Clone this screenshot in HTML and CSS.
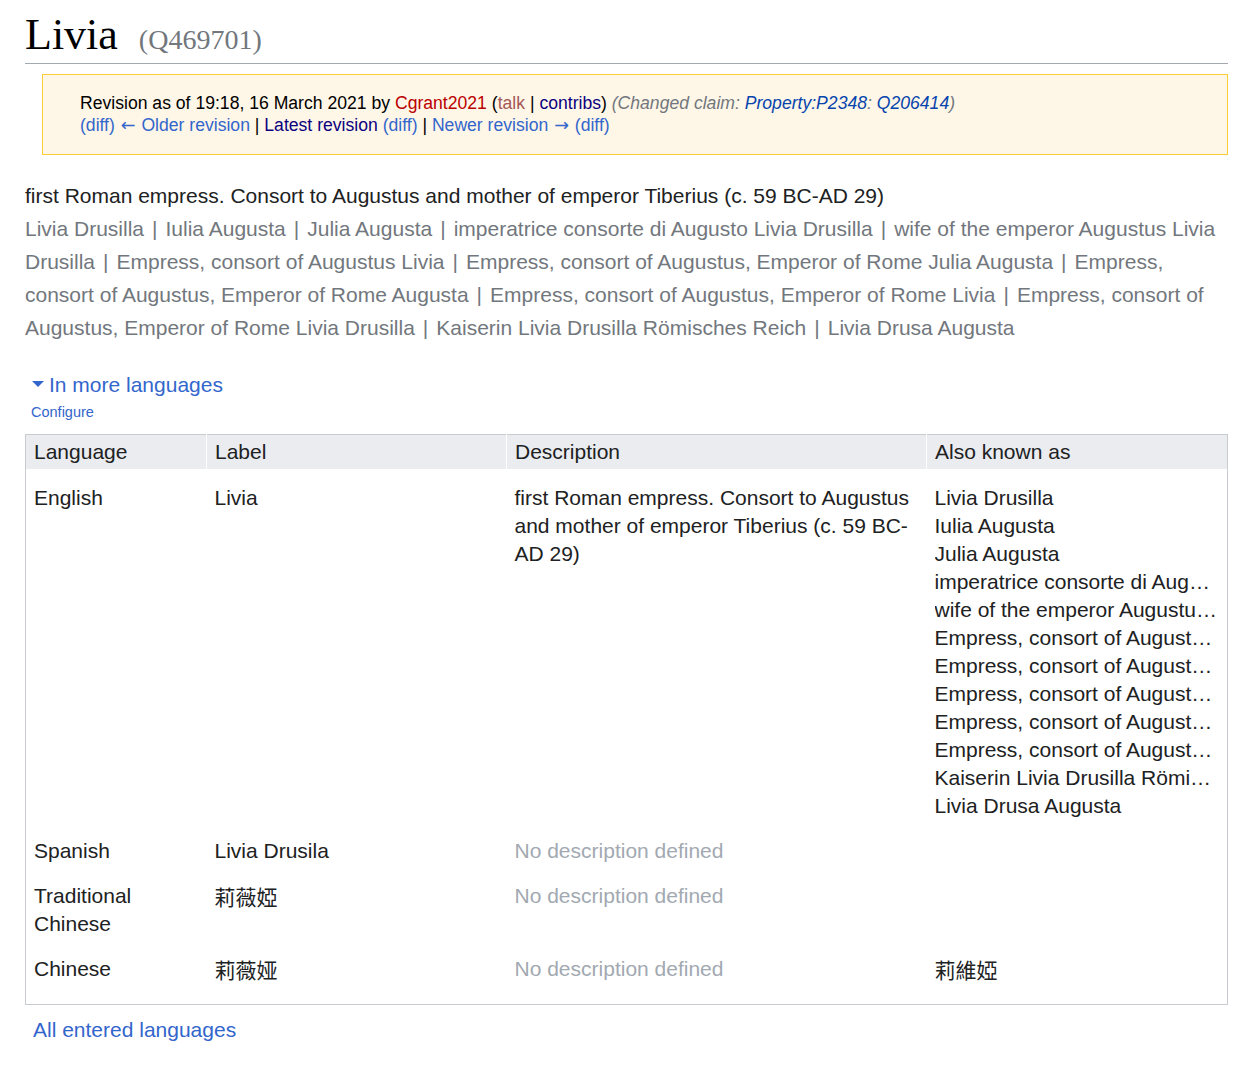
FILE: index.html
```html
<!DOCTYPE html>
<html lang="en">
<head>
<meta charset="utf-8">
<title>Livia (Q469701)</title>
<link rel="stylesheet" href="styles.css">
</head>
<body>
<div class="page">
  <h1 class="title"><span class="label">Livia</span> <span class="qid">(Q469701)</span></h1>

  <div class="revision">
    <div>Revision as of 19:18, 16 March 2021 by <a class="user">Cgrant2021</a> (<a class="talk">talk</a> | <a class="visited">contribs</a>) <span class="comment">(Changed claim: <a class="blue">Property:P2348</a>: <a class="blue">Q206414</a>)</span></div>
    <div><span class="link">(<a class="link">diff</a>)</span> <a class="link"><span class="arrow">←</span> Older revision</a> | <a class="visited">Latest revision</a> <span class="link">(<a class="link">diff</a>)</span> | <a class="link">Newer revision <span class="arrow">→</span></a> <span class="link">(<a class="link">diff</a>)</span></div>
  </div>

  <div class="termbox">
    <div class="desc">first Roman empress. Consort to Augustus and mother of emperor Tiberius (c. 59 BC-AD 29)</div>
    <div class="aliases">Livia Drusilla<span class="sep">|</span>Iulia Augusta<span class="sep">|</span>Julia Augusta<span class="sep">|</span>imperatrice consorte di Augusto Livia Drusilla<span class="sep">|</span>wife of the emperor Augustus Livia Drusilla<span class="sep">|</span>Empress, consort of Augustus Livia<span class="sep">|</span>Empress, consort of Augustus, Emperor of Rome Julia Augusta<span class="sep">|</span>Empress, consort of Augustus, Emperor of Rome Augusta<span class="sep">|</span>Empress, consort of Augustus, Emperor of Rome Livia<span class="sep">|</span>Empress, consort of Augustus, Emperor of Rome Livia Drusilla<span class="sep">|</span>Kaiserin Livia Drusilla Römisches Reich<span class="sep">|</span>Livia Drusa Augusta</div>
  </div>

  <div class="more">
    <div class="more-toggle"><span class="tri"></span><a class="link">In more languages</a></div>
    <div class="configure"><a class="link">Configure</a></div>
  </div>

  <table class="langs">
    <colgroup>
      <col class="c1"><col class="c2"><col class="c3"><col class="c4">
    </colgroup>
    <thead>
      <tr><th>Language</th><th>Label</th><th>Description</th><th>Also known as</th></tr>
    </thead>
    <tbody>
      <tr>
        <td>English</td>
        <td>Livia</td>
        <td>first Roman empress. Consort to Augustus and mother of emperor Tiberius (c. 59 BC-AD 29)</td>
        <td>
          <ul class="alias-list">
            <li>Livia Drusilla</li>
            <li>Iulia Augusta</li>
            <li>Julia Augusta</li>
            <li>imperatrice consorte di Augusto Livia Drusilla</li>
            <li>wife of the emperor Augustus Livia Drusilla</li>
            <li>Empress, consort of Augustus Livia</li>
            <li>Empress, consort of Augustus, Emperor of Rome Julia Augusta</li>
            <li>Empress, consort of Augustus, Emperor of Rome Augusta</li>
            <li>Empress, consort of Augustus, Emperor of Rome Livia</li>
            <li>Empress, consort of Augustus, Emperor of Rome Livia Drusilla</li>
            <li>Kaiserin Livia Drusilla Römisches Reich</li>
            <li>Livia Drusa Augusta</li>
          </ul>
        </td>
      </tr>
      <tr>
        <td>Spanish</td>
        <td>Livia Drusila</td>
        <td class="none">No description defined</td>
        <td></td>
      </tr>
      <tr>
        <td>Traditional Chinese</td>
        <td lang="zh-Hant" class="cjk">莉薇婭</td>
        <td class="none">No description defined</td>
        <td></td>
      </tr>
      <tr>
        <td>Chinese</td>
        <td lang="zh" class="cjk">莉薇娅</td>
        <td class="none">No description defined</td>
        <td lang="zh" class="cjk">莉維婭</td>
      </tr>
    </tbody>
  </table>

  <div class="all"><a class="link">All entered languages</a></div>
</div>
</body>
</html>
```

FILE: styles.css
```css
html, body {
  margin: 0;
  padding: 0;
  background: #fff;
}

.page {
  padding: 0 21px 0 25px;
  font-family: "Liberation Sans", Arial, sans-serif;
  color: #202122;
}

a {
  text-decoration: none;
  cursor: pointer;
}

.title {
  margin: 0;
  padding: 10px 0 3px;
  font-family: "Liberation Serif", "DejaVu Serif", serif;
  font-weight: normal;
  font-size: 44px;
  line-height: 50px;
  border-bottom: 1px solid #a2a9b1;
  color: #000;
}

.title .qid {
  font-size: 28px;
  line-height: 1;
  color: #72777d;
  margin-left: 10px;
}

.revision {
  margin: 10px 0 0 17px;
  padding: 17px 37px 18px;
  background: #fef6e7;
  border: 1px solid #fc3;
  font-size: 17.6px;
  line-height: 22px;
  color: #000;
}

.revision .arrow {
  font-family: "DejaVu Sans", sans-serif;
  font-size: 17.6px;
  line-height: 1;
  margin: 0 1px;
}

.revision .user { color: #ba0000; }
.revision .talk { color: #a55858; }
.revision .visited { color: #0b0080; }
.revision .comment { font-style: italic; color: #72777d; }
.revision .blue { color: #0645ad; }

.link { color: #3366cc; }

.termbox {
  margin-top: 28px;
  font-size: 21px;
  line-height: 33px;
}

.desc {
  line-height: 25px;
  margin-bottom: 4px;
}

.aliases {
  color: #72777d;
}

.aliases .sep {
  margin: 0 8px;
  color: #72777d;
}

.more {
  margin-top: 27px;
  padding-left: 7px;
}

.more-toggle {
  font-size: 21px;
  line-height: 28px;
  display: flex;
  align-items: center;
}

.tri {
  width: 0;
  height: 0;
  border-left: 6px solid transparent;
  border-right: 6px solid transparent;
  border-top: 6px solid #3366cc;
  margin-right: 5px;
  margin-top: -2px;
}

.configure {
  font-size: 14.5px;
  line-height: 24px;
  margin-top: 1px;
  margin-left: -1px;
}

.langs {
  margin-top: 10px;
  width: 100%;
  border-collapse: collapse;
  table-layout: fixed;
  border: 1px solid #c8ccd1;
  font-size: 21px;
  line-height: 28px;
}

.c1 { width: 181px; }
.c2 { width: 300px; }
.c3 { width: 420px; }
.c4 { width: auto; }

.langs th {
  background: #eaecf0;
  font-weight: normal;
  text-align: left;
  padding: 3px 9px 3px 8px;
  border-left: 1px solid #fff;
}

.langs th:first-child { border-left: none; }

.langs td {
  vertical-align: top;
  padding: 8px 9px 9px 8px;
}

.langs tbody tr:first-child td { padding-top: 15px; }
.langs tbody tr:last-child td { padding-bottom: 21px; }

.langs td.none {
  color: #a2a9b1;
}

.cjk {
  font-family: "Noto Sans CJK TC", "Noto Sans CJK SC", sans-serif;
}

.alias-list {
  list-style: none;
  margin: 0;
  padding: 0;
}

.alias-list li {
  white-space: nowrap;
  overflow: hidden;
  text-overflow: ellipsis;
}

.all {
  font-size: 21px;
  line-height: 28px;
  margin-top: 11px;
  padding-left: 8px;
  padding-bottom: 26px;
}
```
